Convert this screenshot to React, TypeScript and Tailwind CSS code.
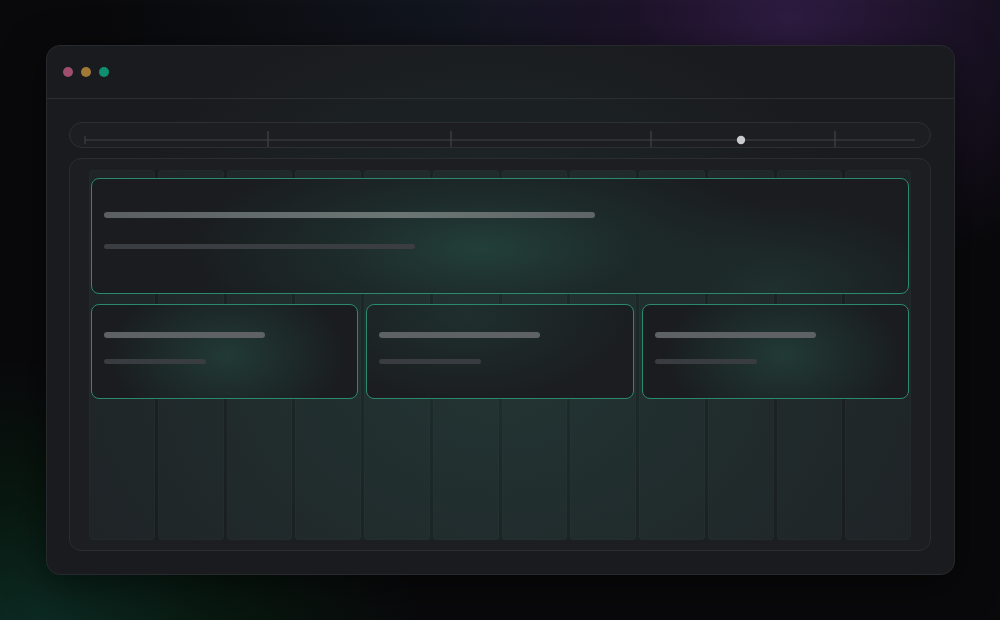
import React from "react";

const columns = Array.from({ length: 12 }, (_, i) => i);

function Timeline() {
  const ticks = [198, 381, 581, 765];
  return (
    <div className="h-[26px] rounded-[13px] border border-[#2d2f34] bg-[#1c1e21]">
      <svg width="860" height="24" viewBox="0 0 860 24" className="block">
        <line x1="15" y1="17" x2="845" y2="17" stroke="#34373b" strokeWidth="1.5" />
        <line x1="15" y1="13" x2="15" y2="21" stroke="#3c3f43" strokeWidth="1.2" />
        {ticks.map((x) => (
          <line key={x} x1={x} y1="8" x2={x} y2="25" stroke="#3a3d41" strokeWidth="1.5" />
        ))}
        <circle cx="671" cy="17" r="4.2" fill="#c9cacc" />
      </svg>
    </div>
  );
}

function SmallCard({ glow }: { glow: string }) {
  return (
    <div
      className={`h-[95px] flex-1 rounded-[8px] border-[1.5px] border-[#2a8a6b] px-3 pt-[27px] ${glow}`}
    >
      <div className="h-[6px] w-[161px] rounded-full bg-[#5e6264]" />
      <div className="mt-[21px] h-[5px] w-[102px] rounded-full bg-[#393c40]" />
    </div>
  );
}

export default function App() {
  return (
    <div className="relative h-[620px] w-[1000px] overflow-hidden bg-[#09090b] pl-[46px] pt-[45px] font-['Liberation_Sans',sans-serif]">
      <div className="absolute inset-0 h-[620px] w-[1000px] bg-[radial-gradient(ellipse_340px_270px_at_790px_20px,#2e1b41_0%,#1d1329_45%,transparent_100%),radial-gradient(ellipse_380px_260px_at_40px_620px,#0c2a22_0%,#08170f_50%,transparent_100%),radial-gradient(ellipse_420px_200px_at_520px_0px,#131822_0%,transparent_100%)]" />
      <div className="relative flex h-[530px] w-[909px] flex-col rounded-[14px] border border-[#27292d] bg-[#1a1b1e] bg-[radial-gradient(ellipse_380px_260px_at_440px_220px,#1d2a29_0%,transparent_100%)] shadow-[0_10px_40px_rgba(0,0,0,0.5)]">
        <div className="flex h-[53px] shrink-0 items-center gap-[8px] border-b border-[#2b2d31] pb-[1px] pl-[16px]">
          <div className="h-[10px] w-[10px] rounded-full bg-[#9d4f6d]" />
          <div className="h-[10px] w-[10px] rounded-full bg-[#a07838]" />
          <div className="h-[10px] w-[10px] rounded-full bg-[#0f8f70]" />
        </div>
        <div className="flex flex-1 flex-col gap-[10px] pb-[23px] pl-[22px] pr-[23px] pt-[23px]">
          <Timeline />
          <div className="flex-1 rounded-[12px] border border-[#2b2d32] bg-[#1c1e21] px-[19px] pb-[10px] pt-[11px]">
            <div className="grid h-full">
              <div className="col-start-1 row-start-1 grid grid-cols-12 gap-[3px] rounded-[3px] bg-[#191b1e]">
                {columns.map((c) => (
                  <div
                    key={c}
                    className="rounded-[3px] border border-[#22272a] bg-[#1f2427]"
                  />
                ))}
              </div>
              <div className="col-start-1 row-start-1 grid grid-cols-1 bg-[radial-gradient(ellipse_460px_340px_at_410px_200px,rgba(44,96,84,0.28)_0%,transparent_100%)]">
                <div className="flex flex-col gap-[10px] px-[2px] pt-[8px]">
                  <div className="h-[116px] rounded-[8px] border-[1.5px] border-[#2a8a6b] bg-[#1a1c1f] bg-[radial-gradient(ellipse_300px_110px_at_390px_70px,#223f3a_0%,#1d2a2a_50%,transparent_100%),radial-gradient(ellipse_180px_90px_at_680px_110px,#1f302f_0%,transparent_100%)] px-3 pt-[33px]">
                    <div className="h-[6px] w-[491px] rounded-full bg-[linear-gradient(90deg,#5b5f62,#6b7674_60%,#5f6466)]" />
                    <div className="mt-[26px] h-[5px] w-[311px] rounded-full bg-[#3a3d41]" />
                  </div>
                  <div className="flex gap-2">
                    <SmallCard glow="bg-[#1a1c1f] bg-[radial-gradient(ellipse_120px_80px_at_135px_50px,#213a36_0%,transparent_100%)]" />
                    <SmallCard glow="bg-[#1b1d20] bg-[radial-gradient(ellipse_170px_90px_at_100px_10px,#1f2f2e_0%,transparent_100%)]" />
                    <SmallCard glow="bg-[#1a1c1f] bg-[radial-gradient(ellipse_120px_80px_at_140px_50px,#213a36_0%,transparent_100%)]" />
                  </div>
                </div>
              </div>
            </div>
          </div>
        </div>
      </div>
    </div>
  );
}
